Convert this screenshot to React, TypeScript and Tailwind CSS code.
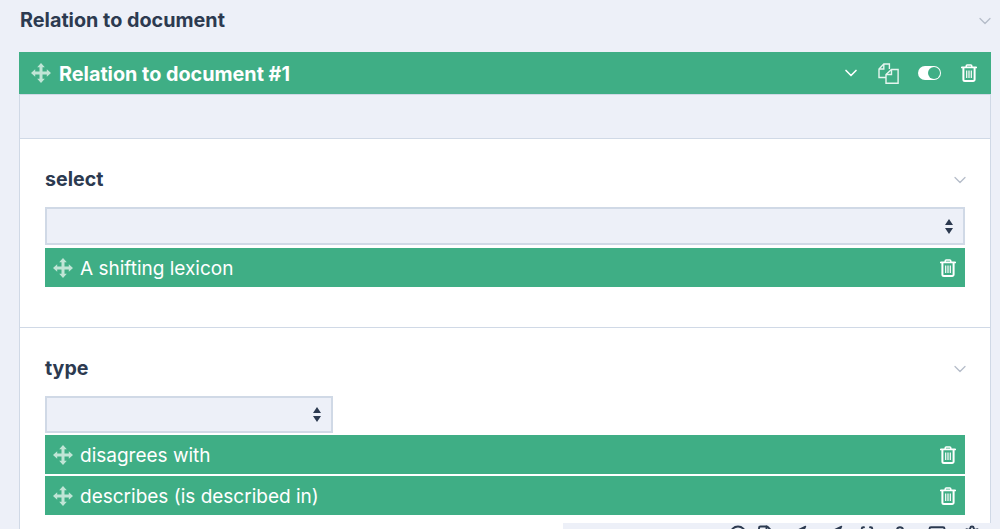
import { Braces, ChevronDown, CircleHelp, File, Monitor, Navigation, Settings, User } from 'lucide-react';

function MoveIcon({ className }: { className: string }) {
  return (
    <svg viewBox="0 0 20 20" className={className} fill="currentColor">
      <path d="M10 0l3.8 4.2h-2.3v4.3h4.3v-2.3l4.2 3.8-4.2 3.8v-2.3h-4.3v4.3h2.3l-3.8 4.2-3.8-4.2h2.3v-4.3h-4.3v2.3l-4.2-3.8 4.2-3.8v2.3h4.3v-4.3h-2.3z" />
    </svg>
  );
}

function TrashIcon({ className }: { className: string }) {
  return (
    <svg viewBox="0 0 16 18" className={className} fill="none" stroke="currentColor">
      <path d="M0.8 3.4h14.4" strokeWidth="1.8" strokeLinecap="round" />
      <path d="M5.2 3V2a1 1 0 0 1 1-1h3.6a1 1 0 0 1 1 1v1" strokeWidth="1.5" />
      <path d="M2.4 4v11.5a1.5 1.5 0 0 0 1.5 1.5h8.2a1.5 1.5 0 0 0 1.5-1.5V4" strokeWidth="2" />
      <path d="M5.7 6.5v7.5M8 6.5v7.5M10.3 6.5v7.5" strokeWidth="1.2" />
    </svg>
  );
}

function CopyIcon({ className }: { className: string }) {
  return (
    <svg viewBox="0 0 21 21" className={className} fill="none" stroke="#e6f5ef" strokeWidth="1.4">
      <path d="M8 14.5H1V6l4.8-5h5.6v5" />
      <path d="M5.8 1v5H1" />
      <path d="M13.5 6.5h6.6v13.8H8V11.5z" fill="#3fae85" />
      <path d="M13.5 6.5v5H8" />
    </svg>
  );
}

function Arrows({ className }: { className: string }) {
  return (
    <svg viewBox="0 0 8 15" className={className} fill="#2c3a50">
      <path d="M4 0l4 6H0zM0 9h8l-4 6z" />
    </svg>
  );
}

function Section({ title, children }: { title: string; children: React.ReactNode }) {
  return (
    <div className="px-[25px]">
      <div className="flex items-center justify-between h-[68px] pt-[14px]">
        <h3 className="text-[19.6px] font-bold text-[#2c3a50]">{title}</h3>
        <ChevronDown className="w-5 h-5 -mr-[5px] text-[#b5bcc9]" strokeWidth={1.5} />
      </div>
      {children}
    </div>
  );
}

function Item({ label }: { label: string }) {
  return (
    <div className="h-[39px] bg-[#3fae85] flex items-center pl-2 pr-[9px] text-white text-[19px]">
      <MoveIcon className="w-5 h-5 text-[#c0e5d6] mr-[7px]" />
      <span className="flex-1 pt-1">{label}</span>
      <TrashIcon className="w-4 h-[18px]" />
    </div>
  );
}

function SelectBox({ width }: { width: string }) {
  return (
    <div className={`${width} bg-[#edf0f8] border-2 border-[#d0d9e6] flex items-center justify-end pr-[10px]`}>
      <Arrows className="w-2 h-[15px]" />
    </div>
  );
}

export default function App() {
  return (
    <div className="w-[1000px] h-[529px] overflow-hidden relative bg-[#edf0f8] font-['Inter',sans-serif]">
      <div className="flex items-center justify-between pl-5 pr-[5px] h-[52px] pb-[10px]">
        <h2 className="text-[19.8px] font-bold text-[#2c3a50]">Relation to document</h2>
        <ChevronDown className="w-5 h-5 text-[#b5bcc9]" strokeWidth={1.5} />
      </div>

      <div className="ml-[19px] mr-[9px] border-x border-[#d0d9e6]">
        <div className="h-[42px] -mx-px bg-[#3fae85] flex items-center pl-[12px] pr-[14px] text-white">
          <MoveIcon className="w-5 h-5 text-[#c0e5d6] mr-[8px]" />
          <span className="flex-1 text-[19.8px] font-bold pt-1">Relation to document #1</span>
          <ChevronDown className="w-5 h-5 mr-[17px]" strokeWidth={2} />
          <CopyIcon className="w-[21px] h-[21px] mr-[19px]" />
          <span className="w-[23px] h-[14px] bg-white rounded-full flex items-center justify-end pr-px mr-5">
            <span className="w-3 h-3 rounded-full bg-[#3fae85]" />
          </span>
          <TrashIcon className="w-4 h-[18px]" />
        </div>
        <div className="h-[45px] border-y border-[#d0d9e6]" />

        <div className="bg-white h-[400px]">
          <Section title="select">
            <SelectBox width="h-[38px]" />
            <div className="mt-[3px]">
              <Item label="A shifting lexicon" />
            </div>
          </Section>
          <div className="border-t border-[#d0d9e6] mt-10" />
          <Section title="type">
            <SelectBox width="h-[37px] w-[288px]" />
            <div className="mt-[2px] flex flex-col gap-[2px]">
              <Item label="disagrees with" />
              <Item label="describes (is described in)" />
            </div>
          </Section>
        </div>
      </div>

      {/* floating toolbar, only its top edge is in view */}
      <div className="absolute left-[563px] right-0 top-[523px] h-6 bg-[#edf0f8] flex items-start pt-[2px] pl-[166px] text-[#2c3a50]">
        <CircleHelp className="w-[18px] h-[18px]" strokeWidth={2.5} />
        <File className="w-[18px] h-[18px] ml-[9px]" strokeWidth={2.5} />
        <Navigation className="w-[18px] h-[18px] ml-[15px]" strokeWidth={2} />
        <Navigation className="w-[18px] h-[18px] ml-[18px]" strokeWidth={2} />
        <Braces className="w-[18px] h-[18px] ml-[15px]" strokeWidth={2.5} />
        <User className="w-[18px] h-[18px] ml-[15px]" strokeWidth={2.5} />
        <Monitor className="w-[18px] h-[18px] ml-[19px]" strokeWidth={2.5} />
        <Settings className="w-[18px] h-[18px] ml-[17px]" strokeWidth={2.5} />
      </div>
    </div>
  );
}
